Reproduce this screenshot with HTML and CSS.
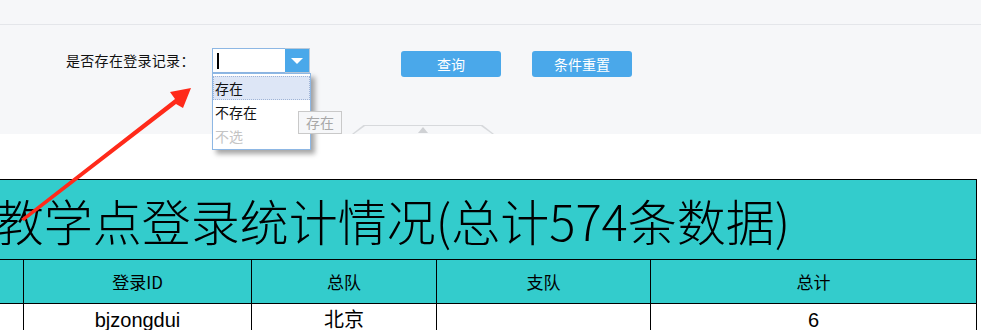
FILE: index.html
```html
<!DOCTYPE html>
<html lang="zh-CN">
<head>
  <meta charset="UTF-8">
  <title>教学点登录统计</title>
  <link rel="stylesheet" href="styles.css">
</head>
<body>
  <div class="topbar"></div>

  <div class="search">
    <div class="search-row">
      <label class="label">是否存在登录记录：</label>
      <div class="select">
        <div class="select-input"><span class="caret"></span></div>
        <div class="select-btn"><span class="tri"></span></div>
        <ul class="dropdown">
          <li class="active">存在</li>
          <li>不存在</li>
          <li class="muted">不选</li>
        </ul>
        <div class="tip">存在</div>
      </div>
      <button class="btn btn-query">查询</button>
      <button class="btn btn-reset">条件重置</button>
    </div>
    <div class="toggle"><span class="toggle-tri"></span></div>
  </div>

  <table class="report">
    <colgroup>
      <col style="width:215px">
      <col style="width:228px">
      <col style="width:185px">
      <col style="width:214px">
      <col style="width:326px">
    </colgroup>
    <tr class="title-row">
      <td colspan="5">教学点登录统计情况(总计574条数据)</td>
    </tr>
    <tr class="head-row">
      <td></td>
      <td>登录ID</td>
      <td>总队</td>
      <td>支队</td>
      <td>总计</td>
    </tr>
    <tr class="data-row">
      <td></td>
      <td>bjzongdui</td>
      <td>北京</td>
      <td></td>
      <td>6</td>
    </tr>
  </table>

  <!-- annotation arrow -->
  <svg class="arrow" width="981" height="330" viewBox="0 0 981 330">
    <polygon points="21,219 24,221 176,104 183,108 191,88 170,92 175,99" fill="#ff2a1a"/>
  </svg>
</body>
</html>
```

FILE: styles.css
```css
html, body {
  margin: 0;
  padding: 0;
  height: 330px;
  overflow: hidden;
}
body {
  font-family: "Noto Sans CJK SC", "Microsoft YaHei", sans-serif;
  font-size: 14px;
  color: #222;
  background: #fff;
  position: relative;
}
.topbar {
  height: 24px;
  background: #f6f7f9;
  border-bottom: 1px solid #e4e6ea;
}
.search {
  height: 109px;
  background: #f6f7f9;
  display: flex;
  flex-direction: column;
}
.search-row {
  display: flex;
  align-items: flex-start;
  padding: 23px 0 0 66px;
}
.label {
  font-size: 14px;
  line-height: 25px;
  width: 146px;
  color: #111;
  letter-spacing: 0.3px;
}
.select {
  position: relative;
  display: flex;
  width: 98px;
  height: 25px;
}
.select-input {
  flex: 1;
  background: #fff;
  border: 1px solid #8db7e4;
  border-right: none;
  display: flex;
  align-items: center;
  padding-left: 4px;
}
.caret {
  width: 2px;
  height: 16px;
  background: #000;
}
.select-btn {
  width: 24px;
  background: #4aa8ea;
  border: 1px solid #b9c9da;
  border-left: none;
  display: flex;
  align-items: center;
  justify-content: center;
}
.tri {
  width: 0;
  height: 0;
  border-left: 6px solid transparent;
  border-right: 6px solid transparent;
  border-top: 6px solid #fff;
}
.dropdown {
  position: absolute;
  top: 25px;
  left: 0;
  width: 97px;
  margin: 0;
  padding: 2px 0 1px;
  list-style: none;
  background: #fff;
  border: 1px solid #8db7e4;
  box-shadow: 4px 4px 5px rgba(0,0,0,0.35);
  z-index: 2;
}
.dropdown li {
  height: 24px;
  line-height: 24px;
  padding-left: 2px;
  font-size: 14px;
  color: #111;
}
.dropdown li.active {
  background: #dde6f6;
  outline: 1px dotted #9fb4d6;
  outline-offset: -1px;
}
.dropdown li.muted {
  color: #c4c4c4;
}
.tip {
  position: absolute;
  top: 63px;
  left: 86px;
  width: 42px;
  height: 21px;
  line-height: 21px;
  text-align: center;
  font-size: 14px;
  color: #a8a8a8;
  background: #f6f7f9;
  border: 1px solid #c9c9c9;
  z-index: 3;
}
.btn {
  height: 26px;
  width: 100px;
  margin-top: 3px;
  border: none;
  border-radius: 3px;
  background: #4aa8ea;
  color: #fff;
  font-family: inherit;
  font-size: 14px;
  padding: 0;
  cursor: pointer;
}
.btn-query {
  margin-left: 91px;
}
.btn-reset {
  margin-left: 31px;
}
.toggle {
  margin: auto 0 0 352px;
  width: 142px;
  height: 9px;
  position: relative;
}
.toggle::before {
  content: "";
  position: absolute;
  inset: 0;
  clip-path: polygon(0 100%, 8% 0, 92% 0, 100% 100%);
  background: #d7d9dc;
}
.toggle::after {
  content: "";
  position: absolute;
  left: 2px;
  right: 2px;
  top: 1px;
  bottom: 0;
  background: #f6f7f9;
  clip-path: polygon(0 100%, 8% 0, 92% 0, 100% 100%);
}
.toggle-tri {
  position: absolute;
  left: 66px;
  top: 2px;
  width: 0;
  height: 0;
  border-left: 5px solid transparent;
  border-right: 5px solid transparent;
  border-bottom: 6px solid #cfd1d4;
  z-index: 1;
}
.report {
  margin: 45px 0 0 -192px;
  width: 1168px;
  border-collapse: collapse;
  table-layout: fixed;
  background: #33cccc;
  color: #000;
}
.report td {
  border: 1px solid #000;
  text-align: center;
  padding: 0;
}
.title-row td {
  height: 79px;
  font-size: 49px;
  font-weight: 300;
  white-space: nowrap;
}
.head-row td {
  height: 43px;
  font-size: 17px;
}
.data-row td {
  height: 31px;
  font-size: 20px;
  line-height: 24px;
  background: #fff;
  font-family: "Liberation Sans", "Noto Sans CJK SC", sans-serif;
}
.arrow {
  position: absolute;
  top: 0;
  left: 0;
  pointer-events: none;
  z-index: 5;
}
```
